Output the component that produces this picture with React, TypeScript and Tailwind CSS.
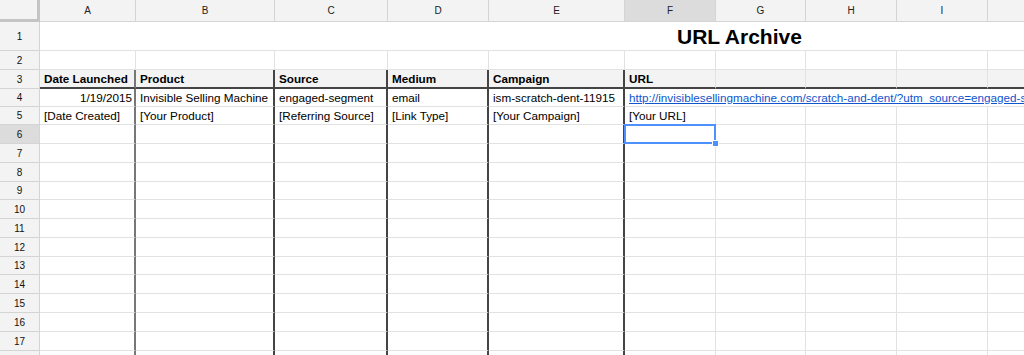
import React from "react";

const COLS = ["A", "B", "C", "D", "E", "F", "G", "H", "I", "J"];
const WIDTHS = [96, 139, 113, 101, 136, 91, 90, 91, 91, 91];
// row heights incl. bottom gridline, rows 1..18
const HEIGHTS = [29, 19, 19, 18, 18, 19, 19, 19, 18, 19, 19, 19, 18, 19, 19, 19, 19, 19];

const headers = ["Date Launched", "Product", "Source", "Medium", "Campaign", "URL"];
const row4 = ["1/19/2015", "Invisible Selling Machine", "engaged-segment", "email", "ism-scratch-dent-11915"];
const row5 = ["[Date Created]", "[Your Product]", "[Referring Source]", "[Link Type]", "[Your Campaign]", "[Your URL]"];

const URL =
  "http://invisiblesellingmachine.com/scratch-and-dent/?utm_source=engaged-segment&utm_medium=email&utm_campaign=ism-scratch-dent-11915";

function RowHead({ n, h }: { n: number; h: number }) {
  const selected = n === 6;
  return (
    <div
      style={{ height: h }}
      className={`w-[40px] shrink-0 flex items-center justify-center border-b border-r border-[#d4d4d4] text-[10px] text-[#111] ${
        selected ? "bg-[#dcdcdc]" : "bg-[#f3f3f3]"
      }`}
    >
      {n < 18 ? n : ""}
    </div>
  );
}

function Cell({ row, col, h }: { row: number; col: number; h: number }) {
  const thick = row >= 3 && col <= 4;
  const header = row === 3;
  const urlRow = row === 4 && col >= 5 && col <= 8;
  const selected = row === 6 && col === 5;

  let border = "border-b border-r border-[#e2e2e2]";
  if (thick) border = `border-b border-[#e2e2e2] border-r-2 ${col === 0 ? "border-r-[#777]" : "border-r-[#444]"}`;
  if (urlRow) border = "border-b border-[#e2e2e2]";
  if (header) border = thick
    ? `border-b-2 border-b-[#444] border-r-2 ${col === 0 ? "border-r-[#777]" : "border-r-[#444]"}`
    : "border-b-2 border-b-[#444] border-r border-r-[#e2e2e2]";

  let content: React.ReactNode = null;
  if (header && col < headers.length) content = <span className="font-bold">{headers[col]}</span>;
  if (row === 4 && col < 5) content = row4[col];
  if (row === 4 && col === 5)
    content = <span className="text-[#1155cc] underline">{URL}</span>;
  if (row === 5 && col < row5.length) content = row5[col];

  const visible = (row === 4 && col === 5) || selected;

  return (
    <div
      style={{ width: WIDTHS[col], height: h }}
      className={`relative shrink-0 flex items-center pl-[4px] pr-[2px] whitespace-nowrap ${border} ${
        header ? "bg-[#f3f3f3]" : ""
      } ${row === 4 && col === 0 ? "justify-end" : ""} ${visible ? "overflow-visible z-10" : "overflow-hidden"}`}
    >
      {content}
      {selected && (
        <div className="absolute left-[-1px] top-[-1px] right-[-1px] bottom-[-1px] border-2 border-[#4d90fe]">
          <div className="absolute right-[-5px] bottom-[-5px] w-[7px] h-[7px] bg-[#4d90fe] border border-white" />
        </div>
      )}
    </div>
  );
}

export default function App() {
  return (
    <div className="w-[1024px] h-[355px] overflow-hidden bg-white text-[11.7px] text-black font-['Liberation_Sans',Arial,sans-serif]">
      {/* column letters */}
      <div className="flex h-[22px]">
        <div className="w-[40px] shrink-0 bg-[#f3f3f3] border-r-[3px] border-b-[3px] border-[#c4c4c4]" />
        {COLS.map((c, i) => (
          <div
            key={c}
            style={{ width: WIDTHS[i] }}
            className={`shrink-0 flex items-center justify-center border-r border-b border-[#d4d4d4] text-[10px] text-[#222] ${
              c === "F" ? "bg-[#dcdcdc]" : "bg-[#f3f3f3]"
            }`}
          >
            {c}
          </div>
        ))}
      </div>

      {/* row 1: merged title */}
      <div className="flex">
        <RowHead n={1} h={HEIGHTS[0]} />
        <div className="flex-1 flex items-center pl-[637px] border-b border-[#e2e2e2]">
          <span className="text-[21px] font-bold leading-none">URL Archive</span>
        </div>
      </div>

      {HEIGHTS.slice(1).map((h, idx) => {
        const row = idx + 2;
        return (
          <div key={row} className="flex">
            <RowHead n={row} h={h} />
            {COLS.map((c, col) => (
              <Cell key={c} row={row} col={col} h={h} />
            ))}
          </div>
        );
      })}
    </div>
  );
}
